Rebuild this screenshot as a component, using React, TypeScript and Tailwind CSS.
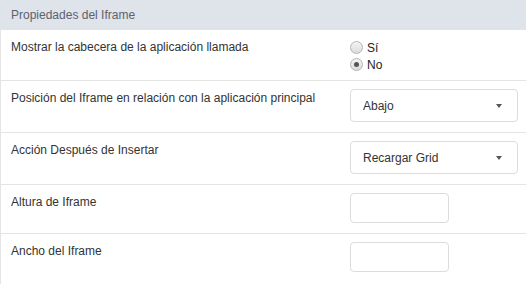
import React from "react";

const font = { fontFamily: '"Liberation Sans", Arial, sans-serif' };

function Radio({ checked, label }: { checked?: boolean; label: string }) {
    return (
        <label className="flex items-center h-[17px] gap-[4px]">
            <span className="w-[13px] h-[13px] rounded-full border border-[#b5b5b5] bg-gradient-to-b from-[#f4f4f4] to-[#dcdcdc] flex items-center justify-center">
                {checked && <span className="w-[5px] h-[5px] rounded-full bg-[#555]"></span>}
            </span>
            <span className="text-[12px] leading-[14px] text-[#222]">{label}</span>
        </label>
    );
}

function Select({ value }: { value: string }) {
    return (
        <div className="w-[168px] h-[33px] border border-[#dcdcdc] rounded-[4px] flex items-center pl-[12px] pr-[15px]">
            <span className="text-[12px] text-[#333] flex-1">{value}</span>
            <span className="w-0 h-0 border-l-[3px] border-r-[3px] border-t-[4px] border-l-transparent border-r-transparent border-t-[#555]"></span>
        </div>
    );
}

function Input() {
    return <div className="w-[99px] h-[30px] border border-[#dcdcdc] rounded-[4px]"></div>;
}

function Row({ label, h, children }: { label: string; h: string; children: React.ReactNode }) {
    return (
        <div className={`flex border-b border-[#e4e4e4] ${h}`}>
            <div className="w-[340px] border-l border-[#e4e4e4] pl-[10px] pt-[10px] text-[12px] leading-[14px] text-[#333]">{label}</div>
            <div className="flex-1 pl-[10px] pt-[8px]">{children}</div>
        </div>
    );
}

export default function App() {
    return (
        <div className="w-[526px] h-[284px] bg-white overflow-hidden" style={font}>
            <div className="h-[30px] bg-[#dfe3ea] flex items-center pl-[11px] text-[12px] text-[#5b6270]">Propiedades del Iframe</div>
            <Row label="Mostrar la cabecera de la aplicación llamada" h="h-[51px]">
                <div className="pt-[1px]">
                    <Radio label="Sí" />
                    <Radio label="No" checked />
                </div>
            </Row>
            <Row label="Posición del Iframe en relación con la aplicación principal" h="h-[52px]">
                <Select value="Abajo" />
            </Row>
            <Row label="Acción Después de Insertar" h="h-[52px]">
                <Select value="Recargar Grid" />
            </Row>
            <Row label="Altura de Iframe" h="h-[49px]">
                <Input />
            </Row>
            <Row label="Ancho del Iframe" h="h-[52px]">
                <Input />
            </Row>
        </div>
    );
}
